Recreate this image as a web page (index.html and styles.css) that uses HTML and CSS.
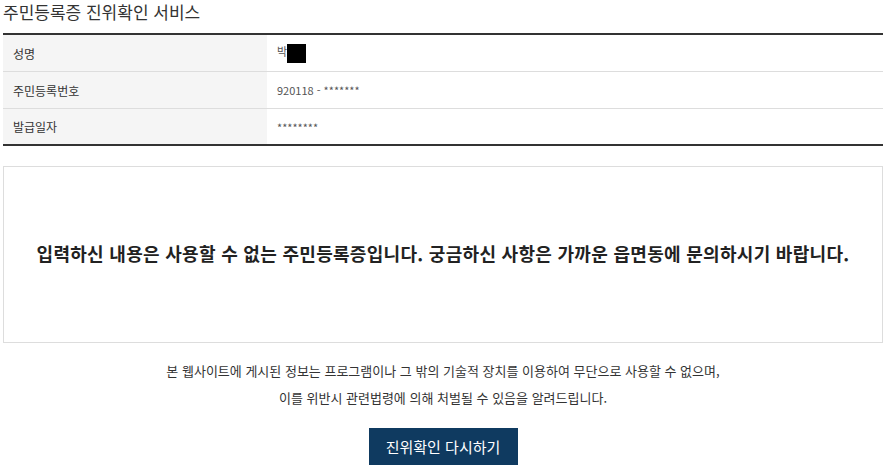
FILE: index.html
```html
<!DOCTYPE html>
<html lang="ko">
<head>
  <meta charset="UTF-8">
  <meta name="viewport" content="width=device-width, initial-scale=1">
  <title>주민등록증 진위확인 서비스</title>
  <link rel="stylesheet" href="styles.css">
</head>
<body>

  <div class="wrap">
    <h2 class="title">주민등록증 진위확인 서비스</h2>

    <!-- 조회 정보 -->
    <table class="info">
      <tr>
        <th>성명</th>
        <td>박<span class="mask"></span></td>
      </tr>
      <tr>
        <th>주민등록번호</th>
        <td>920118 - *******</td>
      </tr>
      <tr>
        <th>발급일자</th>
        <td>********</td>
      </tr>
    </table>

    <!-- 결과 메시지 -->
    <div class="result">
      <p>입력하신 내용은 사용할 수 없는 주민등록증입니다. 궁금하신 사항은 가까운 읍면동에 문의하시기 바랍니다.</p>
    </div>

    <p class="notice">
      본 웹사이트에 게시된 정보는 프로그램이나 그 밖의 기술적 장치를 이용하여 무단으로 사용할 수 없으며,<br>
      이를 위반시 관련법령에 의해 처벌될 수 있음을 알려드립니다.
    </p>

    <div class="btns">
      <button type="button">진위확인 다시하기</button>
    </div>
  </div>

</body>
</html>
```

FILE: styles.css
```css
body {
  margin: 0;
  font-family: "Noto Sans CJK KR", "Noto Sans", sans-serif;
  color: #333;
  background: #fff;
}

.wrap {
  margin: 0 2px 0 3px;
}

.title {
  margin: 0;
  height: 33px;
  font-size: 17px;
  font-weight: normal;
  line-height: 24px;
  color: #333;
}

.info {
  width: 100%;
  border-collapse: collapse;
  border-top: 2px solid #333;
  border-bottom: 2px solid #333;
}

.info th,
.info td {
  height: 36px;
  padding: 0 10px;
  font-size: 12px;
  font-weight: normal;
  text-align: left;
  border-bottom: 1px solid #ddd;
}

.info tr:last-child th,
.info tr:last-child td {
  height: 35px;
}

.info th {
  width: 244px;
  background: #f5f5f5;
  color: #333;
}

.info td {
  color: #555;
  font-size: 11px;
}

.mask {
  display: inline-block;
  width: 19px;
  height: 19px;
  background: #000;
  vertical-align: middle;
}

.result {
  margin-top: 20px;
  height: 175px;
  border: 1px solid #ddd;
  display: flex;
  align-items: center;
  justify-content: center;
}

.result p {
  margin: 0 0 4px;
  font-size: 18px;
  font-weight: bold;
  letter-spacing: 0.3px;
  color: #222;
}

.notice {
  margin: 14px 0 0;
  text-align: center;
  font-size: 13px;
  line-height: 27px;
  color: #333;
}

.btns {
  margin-top: 17px;
  text-align: center;
}

.btns button {
  width: 149px;
  height: 37px;
  border: none;
  background: #0f3a60;
  color: #fff;
  font-family: inherit;
  font-size: 15px;
  cursor: pointer;
}
```
